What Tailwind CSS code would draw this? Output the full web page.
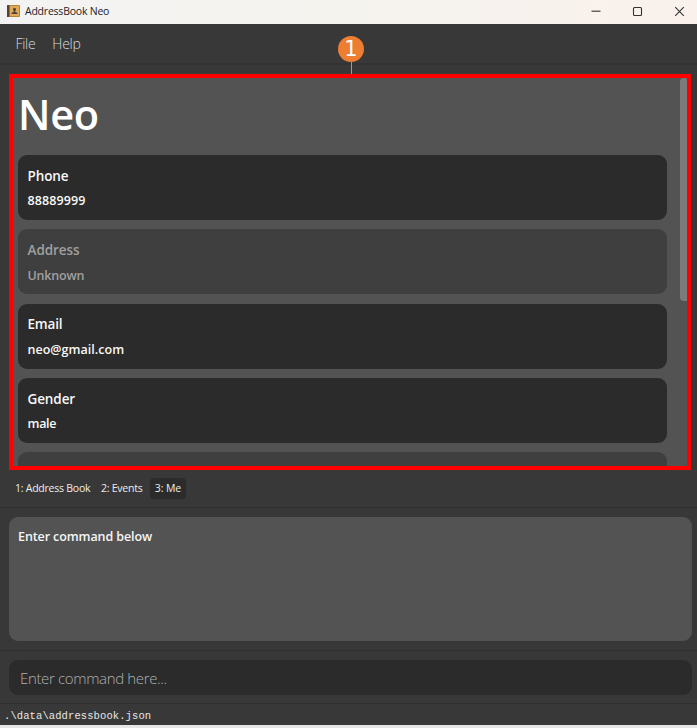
<!DOCTYPE html>
<html lang="en">
<head>
<meta charset="utf-8">
<title>AddressBook Neo</title>
<script src="https://cdn.jsdelivr.net/npm/@tailwindcss/browser@4"></script>
</head>
<body class="w-[697px] h-[728px] overflow-hidden bg-[#383838] font-['Open_Sans','Noto_Sans',sans-serif]">
<div class="flex flex-col w-[697px] h-[728px] whitespace-nowrap">
  <header class="h-6 shrink-0 flex items-center pl-[7px] bg-linear-to-r from-[#f3f3f3] via-[#f5f3ee] via-50% to-[#faf1ec]">
    <svg class="w-[13px] h-3 mt-[-3px]" viewBox="0 0 13 12"><rect width="13" height="12" rx="1" fill="#b78339"/><rect x="3" y="1" width="9" height="10" fill="#dfa958"/><rect width="2.3" height="12" rx=".6" fill="#51433a"/><circle cx="7.5" cy="4.3" r="1.5" fill="#51433a"/><path d="M4.500 9V7.800l2.200-.8V5h1.600v2l2.200.8V9z" fill="#51433a"/></svg>
    <span class="ml-[5px] mt-[-2px] text-[10.5px] leading-4 tracking-[-0.22px] text-[#222]">AddressBook Neo</span>
    <svg class="ml-auto w-[96px] h-[12px] mr-[11px] mt-[-3px]" viewBox="0 0 96 12" fill="none" stroke="#333" stroke-width="1.1"><path d="M1.500 6.200h9"/><rect x="43.500" y="2.500" width="8" height="8" rx="1"/><path d="M85.200 2.200l8.600 8.600M93.800 2.200l-8.600 8.600"/></svg>
  </header>
  <nav class="h-[41px] shrink-0 flex items-center gap-[17px] pl-[15.500px] border-b-2 border-[#323232] text-[14px] tracking-[-0.3px] font-light text-[#dcdcdc]">
    <span>File</span><span>Help</span>
  </nav>
  <main class="relative mt-[9px] ml-[9px] w-[682px] h-[396px] shrink-0 border-4 border-[#ff0000] bg-[#535353]">
    <div class="h-full overflow-hidden flex">
      <div class="w-[649px] ml-[5px] shrink-0">
        <h1 class="h-[77px] pt-[9px] text-[41.500px] leading-[54px] font-semibold tracking-[-0.3px] text-white">Neo</h1>
        <div class="flex flex-col gap-[9.300px] text-[#f8f8f8] font-semibold">
          <section class="h-[65px] shrink-0 rounded-[9px] bg-[#2b2b2b] pl-[9.500px] pt-[10px]"><h2 class="text-[13.500px] leading-[22px] tracking-[-0.1px]">Phone</h2><p class="mt-[4px] text-[12.500px] leading-5 tracking-[0.12px]">88889999</p></section>
          <section class="h-[65px] shrink-0 rounded-[9px] bg-[#3f3f3f] pl-[9.500px] pt-[10px] text-[#9f9f9f]"><h2 class="text-[13.500px] leading-[22px] tracking-[-0.05px]">Address</h2><p class="mt-[5px] text-[12.500px] leading-5 tracking-[-0.2px]">Unknown</p></section>
          <section class="h-[65px] shrink-0 rounded-[9px] bg-[#2b2b2b] pl-[9.500px] pt-[9px]"><h2 class="text-[13.500px] leading-[22px] tracking-[-0.2px]">Email</h2><p class="mt-[5px] text-[12.500px] leading-5 tracking-[0.03px]">neo@gmail.com</p></section>
          <section class="h-[65px] shrink-0 rounded-[9px] bg-[#2b2b2b] pl-[9.500px] pt-[10px]"><h2 class="text-[13.500px] leading-[22px] tracking-[-0.1px]">Gender</h2><p class="mt-[4px] text-[12.500px] leading-5 tracking-[-0.3px]">male</p></section>
          <section class="h-[65px] shrink-0 rounded-[9px] bg-[#3f3f3f]"></section>
        </div>
      </div>
      <div class="ml-auto w-[7px] h-[223px] rounded-l-[4px] rounded-tr-[2px] bg-[#7b7b7b]"></div>
    </div>
    <div class="absolute left-[325px] top-[-42px] flex flex-col items-center">
      <span class="w-[26px] h-[26px] rounded-full bg-[#ed7d31] text-white text-[21px] leading-[27px] text-center font-['DejaVu_Sans']">1</span>
      <span class="w-px h-[12px] bg-[#d98a5c]"></span>
    </div>
  </main>
  <div class="h-[38px] shrink-0 flex items-center pl-[10px] gap-px border-b border-[#303030] text-[10.500px] text-[#ededed]">
    <span class="h-[21px] w-[86px] pl-[5px] leading-[20px] tracking-[-0.24px]">1: Address Book</span>
    <span class="h-[21px] w-[52px] pl-[4px] leading-[20px] tracking-[-0.24px]">2: Events</span>
    <span class="h-[21px] w-[36px] text-center leading-[20px] tracking-[-0.1px] rounded-[4px] bg-[#2b2b2b]">3: Me</span>
  </div>
  <section class="mt-[9px] ml-[9px] w-[683px] h-[124px] shrink-0 rounded-[9px] bg-[#535353] pl-[9px] pt-[10px] text-[12.500px] leading-5 tracking-[-0.1px] font-semibold text-[#f5f5f5]">Enter command below</section>
  <div class="mt-[9px] h-[54px] shrink-0 border-y border-[#303030] pt-[9px]">
    <div class="ml-[9px] w-[683px] h-[35px] rounded-[9px] bg-[#2b2b2b] pl-[11px] text-[15px] leading-[36px] tracking-[-0.35px] font-light text-[#b0b0b0]">Enter command here...</div>
  </div>
  <footer class="h-[21px] shrink-0 pl-[4px] text-[10.500px] leading-[24px] tracking-[0.1px] text-[#e6e6e6] font-['Liberation_Mono',monospace]">.\data\addressbook.json</footer>
  <div class="h-[3px] shrink-0 bg-[#e6e6e6]"></div>
</div>
</body>
</html>
